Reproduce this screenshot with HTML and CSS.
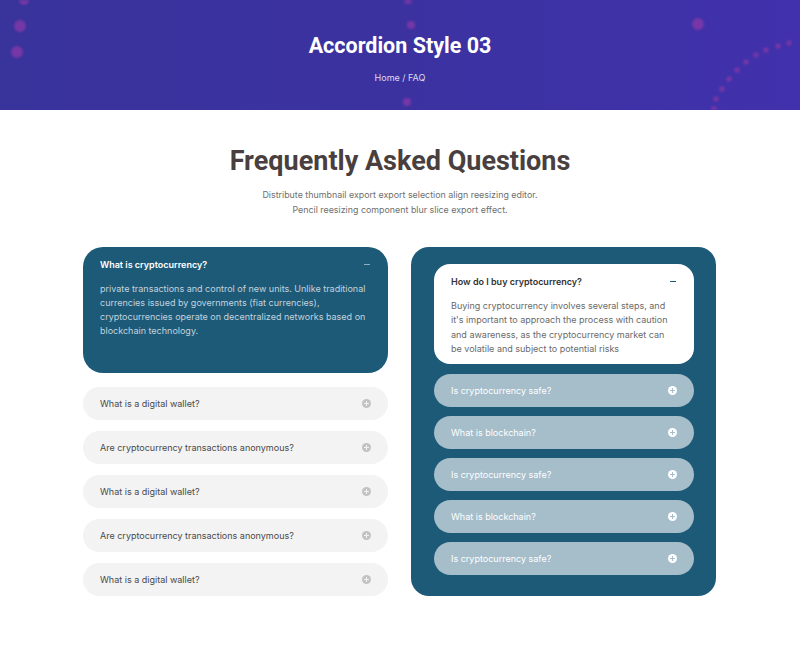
FILE: index.html
```html
<!DOCTYPE html>
<html lang="en">
<head>
    <meta charset="UTF-8">
    <meta name="viewport" content="width=device-width, initial-scale=1.0">
    <title>Accordion Style 03</title>
    <link rel="stylesheet" href="styles.css">
</head>
<body>
    <header class="hero">
        <svg class="hero-dots" width="800" height="110" viewBox="0 0 800 110">
            <g fill="#8a3aa8" opacity="0.75">
                <circle cx="24" cy="0" r="5"/>
                <circle cx="20" cy="26" r="6"/>
                <circle cx="17" cy="52" r="6"/>
                <circle cx="408" cy="0" r="4"/>
                <circle cx="411" cy="25" r="4"/>
                <circle cx="407" cy="102" r="4"/>
                <circle cx="698" cy="24" r="6"/>
            </g>
            <g fill="#8a3aa8" opacity="0.7">
                <circle cx="714" cy="109" r="3"/>
                <circle cx="716" cy="99" r="2.8"/>
                <circle cx="722" cy="89" r="2.8"/>
                <circle cx="729" cy="79" r="2.8"/>
                <circle cx="737" cy="70" r="2.8"/>
                <circle cx="746" cy="62" r="2.8"/>
                <circle cx="756" cy="55" r="2.8"/>
                <circle cx="766" cy="50" r="2.8"/>
                <circle cx="778" cy="46" r="2.8"/>
                <circle cx="789" cy="43" r="2.8"/>
            </g>
        </svg>
        <h1 class="hero-title">Accordion Style 03</h1>
        <p class="breadcrumb">Home / FAQ</p>
    </header>

    <section class="faq">
        <h2 class="faq-title">Frequently Asked Questions</h2>
        <p class="faq-lead">Distribute thumbnail export export selection align reesizing editor.<br>Pencil reesizing component blur slice export effect.</p>

        <div class="faq-columns">
            <div class="faq-list">
                <div class="item item-open item-dark">
                    <div class="item-head">
                        <span>What is cryptocurrency?</span>
                        <span class="minus"></span>
                    </div>
                    <p class="item-body">private transactions and control of new units. Unlike traditional currencies issued by governments (fiat currencies), cryptocurrencies operate on decentralized networks based on blockchain technology.</p>
                </div>
                <div class="item item-light">
                    <div class="item-head"><span>What is a digital wallet?</span><span class="plus"></span></div>
                </div>
                <div class="item item-light">
                    <div class="item-head"><span>Are cryptocurrency transactions anonymous?</span><span class="plus"></span></div>
                </div>
                <div class="item item-light">
                    <div class="item-head"><span>What is a digital wallet?</span><span class="plus"></span></div>
                </div>
                <div class="item item-light">
                    <div class="item-head"><span>Are cryptocurrency transactions anonymous?</span><span class="plus"></span></div>
                </div>
                <div class="item item-light">
                    <div class="item-head"><span>What is a digital wallet?</span><span class="plus"></span></div>
                </div>
            </div>

            <div class="faq-panel">
                <div class="item item-open item-white">
                    <div class="item-head">
                        <span>How do I buy cryptocurrency?</span>
                        <span class="minus"></span>
                    </div>
                    <p class="item-body">Buying cryptocurrency involves several steps, and it's important to approach the process with caution and awareness, as the cryptocurrency market can be volatile and subject to potential risks</p>
                </div>
                <div class="item item-muted">
                    <div class="item-head"><span>Is cryptocurrency safe?</span><span class="plus"></span></div>
                </div>
                <div class="item item-muted">
                    <div class="item-head"><span>What is blockchain?</span><span class="plus"></span></div>
                </div>
                <div class="item item-muted">
                    <div class="item-head"><span>Is cryptocurrency safe?</span><span class="plus"></span></div>
                </div>
                <div class="item item-muted">
                    <div class="item-head"><span>What is blockchain?</span><span class="plus"></span></div>
                </div>
                <div class="item item-muted">
                    <div class="item-head"><span>Is cryptocurrency safe?</span><span class="plus"></span></div>
                </div>
            </div>
        </div>
    </section>
</body>
</html>
```

FILE: styles.css
```css
body {
    font-family: Inter, "Noto Sans", sans-serif;
    background-color: #fff;
    margin: 0;
    padding: 0;
}

.hero {
    position: relative;
    height: 110px;
    overflow: hidden;
    background: linear-gradient(90deg, #39339c 0%, #3b32a0 50%, #4131ac 100%);
    text-align: center;
    color: #fff;
}

.hero-dots {
    position: absolute;
    top: 0;
    left: 0;
    filter: blur(0.8px);
}

.hero-title {
    position: relative;
    font-family: Roboto, sans-serif;
    font-size: 21.5px;
    font-weight: 700;
    margin: 0;
    padding-top: 33px;
    line-height: 26px;
}

.breadcrumb {
    position: relative;
    font-size: 9px;
    color: #dcdaf2;
    margin: 13px 0 0;
    line-height: 12px;
}

.faq {
    width: 634px;
    margin: 0 auto;
    padding-top: 35px;
    text-align: center;
}

.faq-title {
    font-family: Roboto, sans-serif;
    font-size: 27px;
    font-weight: 700;
    color: #4a3f3f;
    margin: 0;
    line-height: 32px;
}

.faq-lead {
    font-size: 8.9px;
    line-height: 15px;
    color: #6f6f6f;
    margin: 10px 0 0;
}

.faq-columns {
    display: grid;
    grid-template-columns: 305px 305px;
    gap: 23px;
    margin-top: 30px;
    text-align: left;
}

.faq-list {
    display: flex;
    flex-direction: column;
    gap: 11px;
}

.faq-panel {
    display: flex;
    flex-direction: column;
    gap: 9px;
    background-color: #1d5a78;
    border-radius: 18px;
    padding: 17px 22px 21px 23px;
}

.item {
    border-radius: 17px;
    padding: 0 17px;
}

.item-head {
    display: flex;
    align-items: center;
    justify-content: space-between;
    height: 33px;
    font-size: 9px;
}

.item-open .item-head {
    height: 35px;
    font-weight: 600;
}

.item-body {
    margin: 0;
    font-size: 9px;
    line-height: 14px;
}

.item-dark {
    background-color: #1d5a78;
    color: #fff;
    border-radius: 20px;
    padding-bottom: 35px;
    margin-bottom: 3px;
}

.item-dark .item-body {
    color: #c3d3dd;
}

.item-dark .minus {
    background-color: #8eaec1;
}

.item-white {
    background-color: #fff;
    color: #333;
    border-radius: 16px;
    padding-bottom: 7px;
    margin-bottom: 1px;
}

.item-white .item-body {
    color: #6a6a6a;
    line-height: 14.4px;
}

.item-white .minus {
    background-color: #1d5a78;
}

.item-light {
    background-color: #f3f3f3;
    color: #4a4a4a;
}

.item-muted {
    background-color: #a6bdca;
    color: #fff;
}

.minus {
    width: 6px;
    height: 1.2px;
    margin-right: 1px;
}

.plus {
    position: relative;
    width: 9px;
    height: 9px;
    border-radius: 50%;
    background-color: #c2c2c2;
}

.item-muted .plus {
    background-color: #fff;
}

.plus::before,
.plus::after {
    content: "";
    position: absolute;
    left: 2px;
    top: 4px;
    width: 5px;
    height: 1px;
    background-color: #f3f3f3;
}

.plus::after {
    transform: rotate(90deg);
}

.item-muted .plus::before,
.item-muted .plus::after {
    background-color: #a6bdca;
}
```
